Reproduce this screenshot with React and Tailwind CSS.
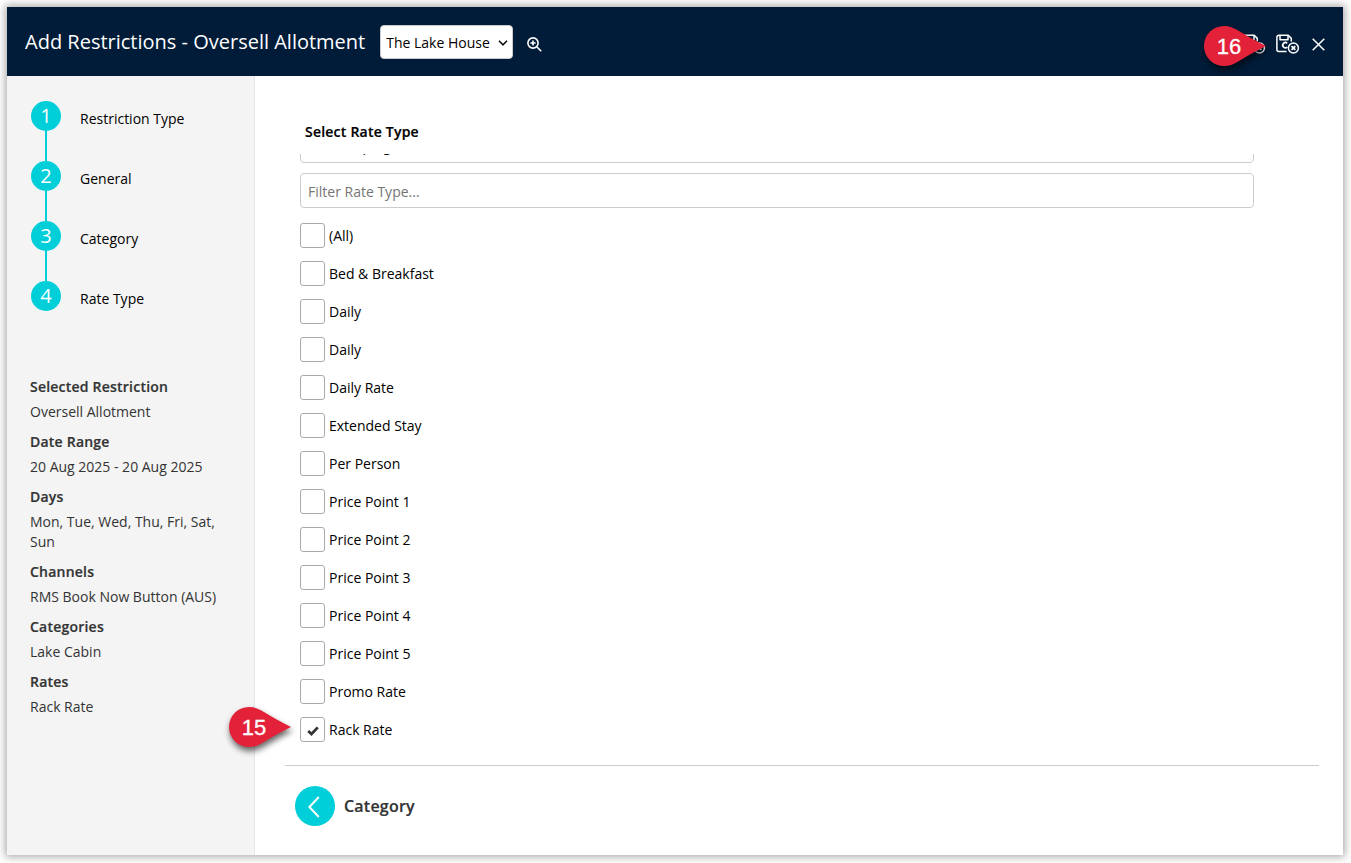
import { useState } from "react";

const steps = ["Restriction Type", "General", "Category", "Rate Type"];

const summary = [
  { label: "Selected Restriction", value: "Oversell Allotment" },
  { label: "Date Range", value: "20 Aug 2025 - 20 Aug 2025" },
  { label: "Days", value: "Mon, Tue, Wed, Thu, Fri, Sat, Sun" },
  { label: "Channels", value: "RMS Book Now Button (AUS)" },
  { label: "Categories", value: "Lake Cabin" },
  { label: "Rates", value: "Rack Rate" },
];

const rateTypes = [
  "(All)",
  "Bed & Breakfast",
  "Daily",
  "Daily",
  "Daily Rate",
  "Extended Stay",
  "Per Person",
  "Price Point 1",
  "Price Point 2",
  "Price Point 3",
  "Price Point 4",
  "Price Point 5",
  "Promo Rate",
  "Rack Rate",
];

const boldClass = "font-semibold tracking-[0.22px] [-webkit-text-stroke:0.2px]";

function SaveExitIcon() {
  return (
    <svg width="24" height="20" viewBox="0 0 24 20" fill="none" stroke="#fff" strokeWidth="1.5" strokeLinejoin="round">
      <path d="M10.5 17.5H2.9a2 2 0 0 1-2-2V3.3a2 2 0 0 1 2-2H12.2l3.1 3.1v3" />
      <path d="M4 1.3v4.4h8V1.3" />
      <path d="M11.2 9.3a2.6 2.6 0 1 0 0 3.7" strokeWidth="1.7" />
      <circle cx="17.4" cy="14" r="5" />
      <path d="M15.5 12.1l3.8 3.8M19.3 12.1l-3.8 3.8" strokeWidth="1.7" />
    </svg>
  );
}

// Numbered red drop that points to the right
function Marker({ number }) {
  return (
    <div className="relative w-[63px] h-10">
      <svg width="63" height="40" viewBox="0 0 63 40" className="overflow-visible drop-shadow-[1px_4px_3px_rgba(0,0,0,0.6)]">
        <path d="M20 0C26 0 30 2 35 5C43 10 52 15 62 20C52 25 43 30 35 35C30 38 26 40 20 40A20 20 0 0 1 20 0Z" fill="#e32239" />
      </svg>
      <span className="absolute left-0 top-0 w-[50px] h-10 pt-0.5 flex items-center justify-center text-white text-[22px] leading-none [-webkit-text-stroke:0.3px]" style={{ fontFamily: "'Liberation Sans', sans-serif" }}>
        {number}
      </span>
    </div>
  );
}

export default function App() {
  const [checked, setChecked] = useState([13]);
  const [filter, setFilter] = useState("");

  const toggle = (i) =>
    setChecked(checked.includes(i) ? checked.filter((c) => c !== i) : [...checked, i]);

  return (
    <div className="w-[1351px] h-[863px] bg-white p-[7px] pb-2 pr-2 overflow-hidden text-sm leading-5 text-black" style={{ fontFamily: "'Open Sans', sans-serif" }}>
      <div className="relative h-[848px] w-[1336px] flex flex-col bg-white shadow-[0_0_8px_2px_rgba(0,0,0,0.33)]">
        {/* Header */}
        <header className="h-[69px] shrink-0 bg-[#001c38] flex items-center pl-[18px] pr-[18px] text-white">
          <h1 className="text-[20px] leading-7">Add Restrictions - Oversell Allotment</h1>
          <button className="ml-[15px] h-[34px] w-[133px] shrink-0 rounded bg-white border border-[#ccc] text-black flex items-center justify-between pl-[5px] pr-[4px] pt-0.5">
            <span className="whitespace-nowrap">The Lake House</span>
            <svg width="10" height="8" viewBox="0 0 10 8" fill="none" stroke="#111" strokeWidth="1.6">
              <path d="M1 1.8l4 4 4-4" />
            </svg>
          </button>
          <svg className="ml-[14px] mt-[6px]" width="15" height="15" viewBox="0 0 15 15" fill="none" stroke="#fff" strokeWidth="1.6">
            <circle cx="6" cy="6" r="5.1" />
            <path d="M6 3.4v5.2M3.4 6h5.2M9.8 9.8l4.4 4.4" />
          </svg>
          <div className="ml-auto mt-[5px] flex items-center">
            <SaveExitIcon />
            <span className="ml-[10px]"><SaveExitIcon /></span>
            <svg className="ml-[12px]" width="13" height="13" viewBox="0 0 13 13" stroke="#fff" strokeWidth="1.5">
              <path d="M.7.7l11.6 11.6M12.3.7L.7 12.3" />
            </svg>
          </div>
        </header>

        <div className="flex flex-1 min-h-0">
          {/* Steps and summary */}
          <aside className="w-[248px] shrink-0 bg-[#f4f4f4] border-r border-[#e7e7e7] pt-[25px] pl-[23px]">
            <ol className="ml-px">
              {steps.map((step, i) => (
                <li key={step} className="flex h-[60px]">
                  <div className="w-[30px] flex flex-col items-center">
                    <span className="w-[30px] h-[30px] rounded-full bg-[#00ced9] text-white text-[20px] flex items-center justify-center">{i + 1}</span>
                    {i < steps.length - 1 && <span className="w-0.5 h-[30px] bg-[#00ced9]" />}
                  </div>
                  <span className="ml-[19px] mt-2">{step}</span>
                </li>
              ))}
            </ol>
            <dl className="mt-[33px] w-[195px] text-[#333]">
              {summary.map((item) => (
                <div key={item.label} className="pt-[3px] mb-[7px]">
                  <dt className={boldClass}>{item.label}</dt>
                  <dd className="mt-[5px]">{item.value}</dd>
                </div>
              ))}
            </dl>
          </aside>

          {/* Rate type picker */}
          <main className="flex-1 flex flex-col pt-[46px] pl-[30px] pr-6">
            <h2 className={`ml-5 leading-5 ${boldClass}`}>Select Rate Type</h2>
            <div className="mt-3 h-[611px] shrink-0 overflow-hidden pl-[15px]">
              {/* list is scrolled, so only the foot of the grouping box shows */}
              <div className="-mt-[26px] w-[954px]">
                <div className="h-[35px] rounded border border-[#ccc] px-[6px] pt-[7px]">No Grouping</div>
                <input
                  value={filter}
                  onChange={(e) => setFilter(e.target.value)}
                  placeholder="Filter Rate Type..."
                  className="block mt-[10px] h-[35px] w-full rounded border border-[#ccc] px-[7px] pt-0.5 placeholder-[#757575] outline-none"
                />
                <ul className="mt-[15px] space-y-[13px]">
                  {rateTypes.map((rate, i) => (
                    <li key={i} className="flex h-[25px] items-center">
                      <button onClick={() => toggle(i)} className="w-[25px] h-[25px] rounded-[3px] border border-[#aaa] flex items-center justify-center">
                        {checked.includes(i) && (
                          <svg width="12" height="10" viewBox="0 0 12 10" className="mt-0.5" fill="none" stroke="#333" strokeWidth="2.8">
                            <path d="M1.2 5l3.3 3L10.8 1.4" />
                          </svg>
                        )}
                      </button>
                      <span className="ml-1">{rate}</span>
                    </li>
                  ))}
                </ul>
              </div>
            </div>
            <div className="border-t border-[#ccc] pt-5 pl-[10px] flex items-center">
              <button className="w-10 h-10 rounded-full bg-[#00ced9] flex items-center justify-center">
                <svg width="12" height="22" viewBox="0 0 12 22" fill="none" stroke="#fff" strokeWidth="2" className="-ml-0.5 mt-px">
                  <path d="M10.8 1L1.4 11l9.4 10" />
                </svg>
              </button>
              <span className={`ml-[9px] text-base text-[#333] ${boldClass}`}>Category</span>
            </div>
          </main>
        </div>

        {/* Walkthrough markers */}
        <div className="absolute left-[1197px] top-[19px]"><Marker number={16} /></div>
        <div className="absolute left-[222px] top-[700px]"><Marker number={15} /></div>
      </div>
    </div>
  );
}
